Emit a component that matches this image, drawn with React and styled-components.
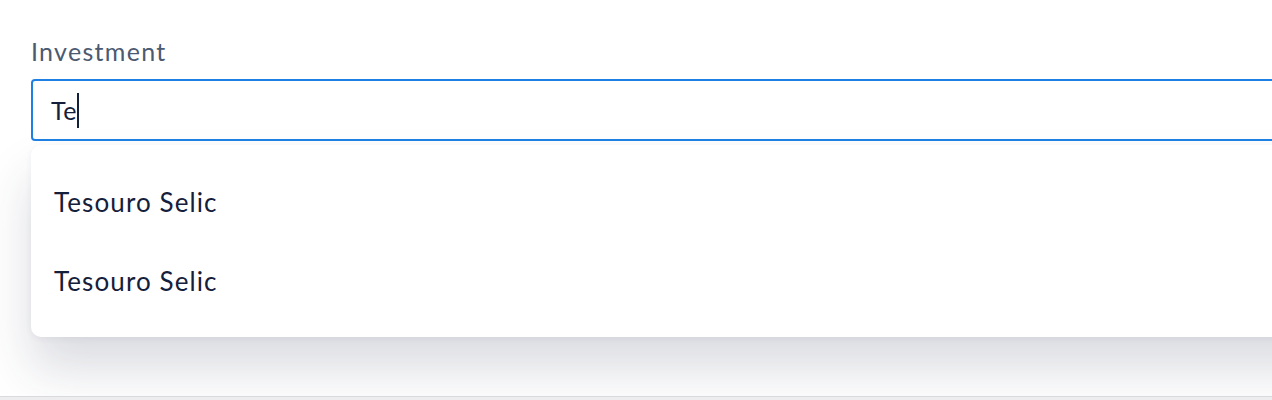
import styled, { createGlobalStyle } from "styled-components";

const GlobalStyle = createGlobalStyle`
  html, body {
    margin: 0;
    padding: 0;
    background: #ededf0;
    font-family: "Lato", "Liberation Sans", sans-serif;
  }
`;

// 화면 위쪽 흰 패널
const Panel = styled.div`
  height: 396px;
  overflow: hidden;
  background: #fff;
  border-bottom: 1px solid #d9dadf;
`;

const Field = styled.div`
  width: 1400px;
  padding: 36px 0 0 31px;
  display: flex;
  flex-direction: column;
`;

const Label = styled.label`
  font-size: 25px;
  letter-spacing: 1.3px;
  color: #4b5a71;
  line-height: 30px;
  margin-bottom: 13px;
`;

const InputBox = styled.div`
  height: 58px;
  border: 2px solid #1e80e2;
  border-radius: 4px;
  display: flex;
  align-items: center;
  padding-left: 18px;
  font-size: 25px;
  letter-spacing: 0.5px;
  color: #14203b;
`;

const Caret = styled.span`
  display: inline-block;
  width: 2px;
  height: 35px;
  background: #14203b;
`;

const Dropdown = styled.ul`
  list-style: none;
  margin: 4px 0 0 0;
  padding: 17px 0;
  background: #fff;
  border-radius: 10px;
  box-shadow: 0 32px 50px rgba(40, 45, 80, 0.17), 0 2px 6px rgba(40, 45, 80, 0.06);
`;

const Option = styled.li`
  height: 79px;
  display: flex;
  align-items: center;
  padding-left: 23px;
  font-size: 26px;
  letter-spacing: 1.1px;
  color: #14203b;
  cursor: pointer;
`;

export default function App() {
  const options = ["Tesouro Selic", "Tesouro Selic"];
  return (
    <>
      <GlobalStyle />
      <Panel>
        <Field>
          <Label>Investment</Label>
          <InputBox>
            Te
            <Caret />
          </InputBox>
          <Dropdown>
            {options.map((item, index) => (
              <Option key={index}>{item}</Option>
            ))}
          </Dropdown>
        </Field>
      </Panel>
    </>
  );
}
